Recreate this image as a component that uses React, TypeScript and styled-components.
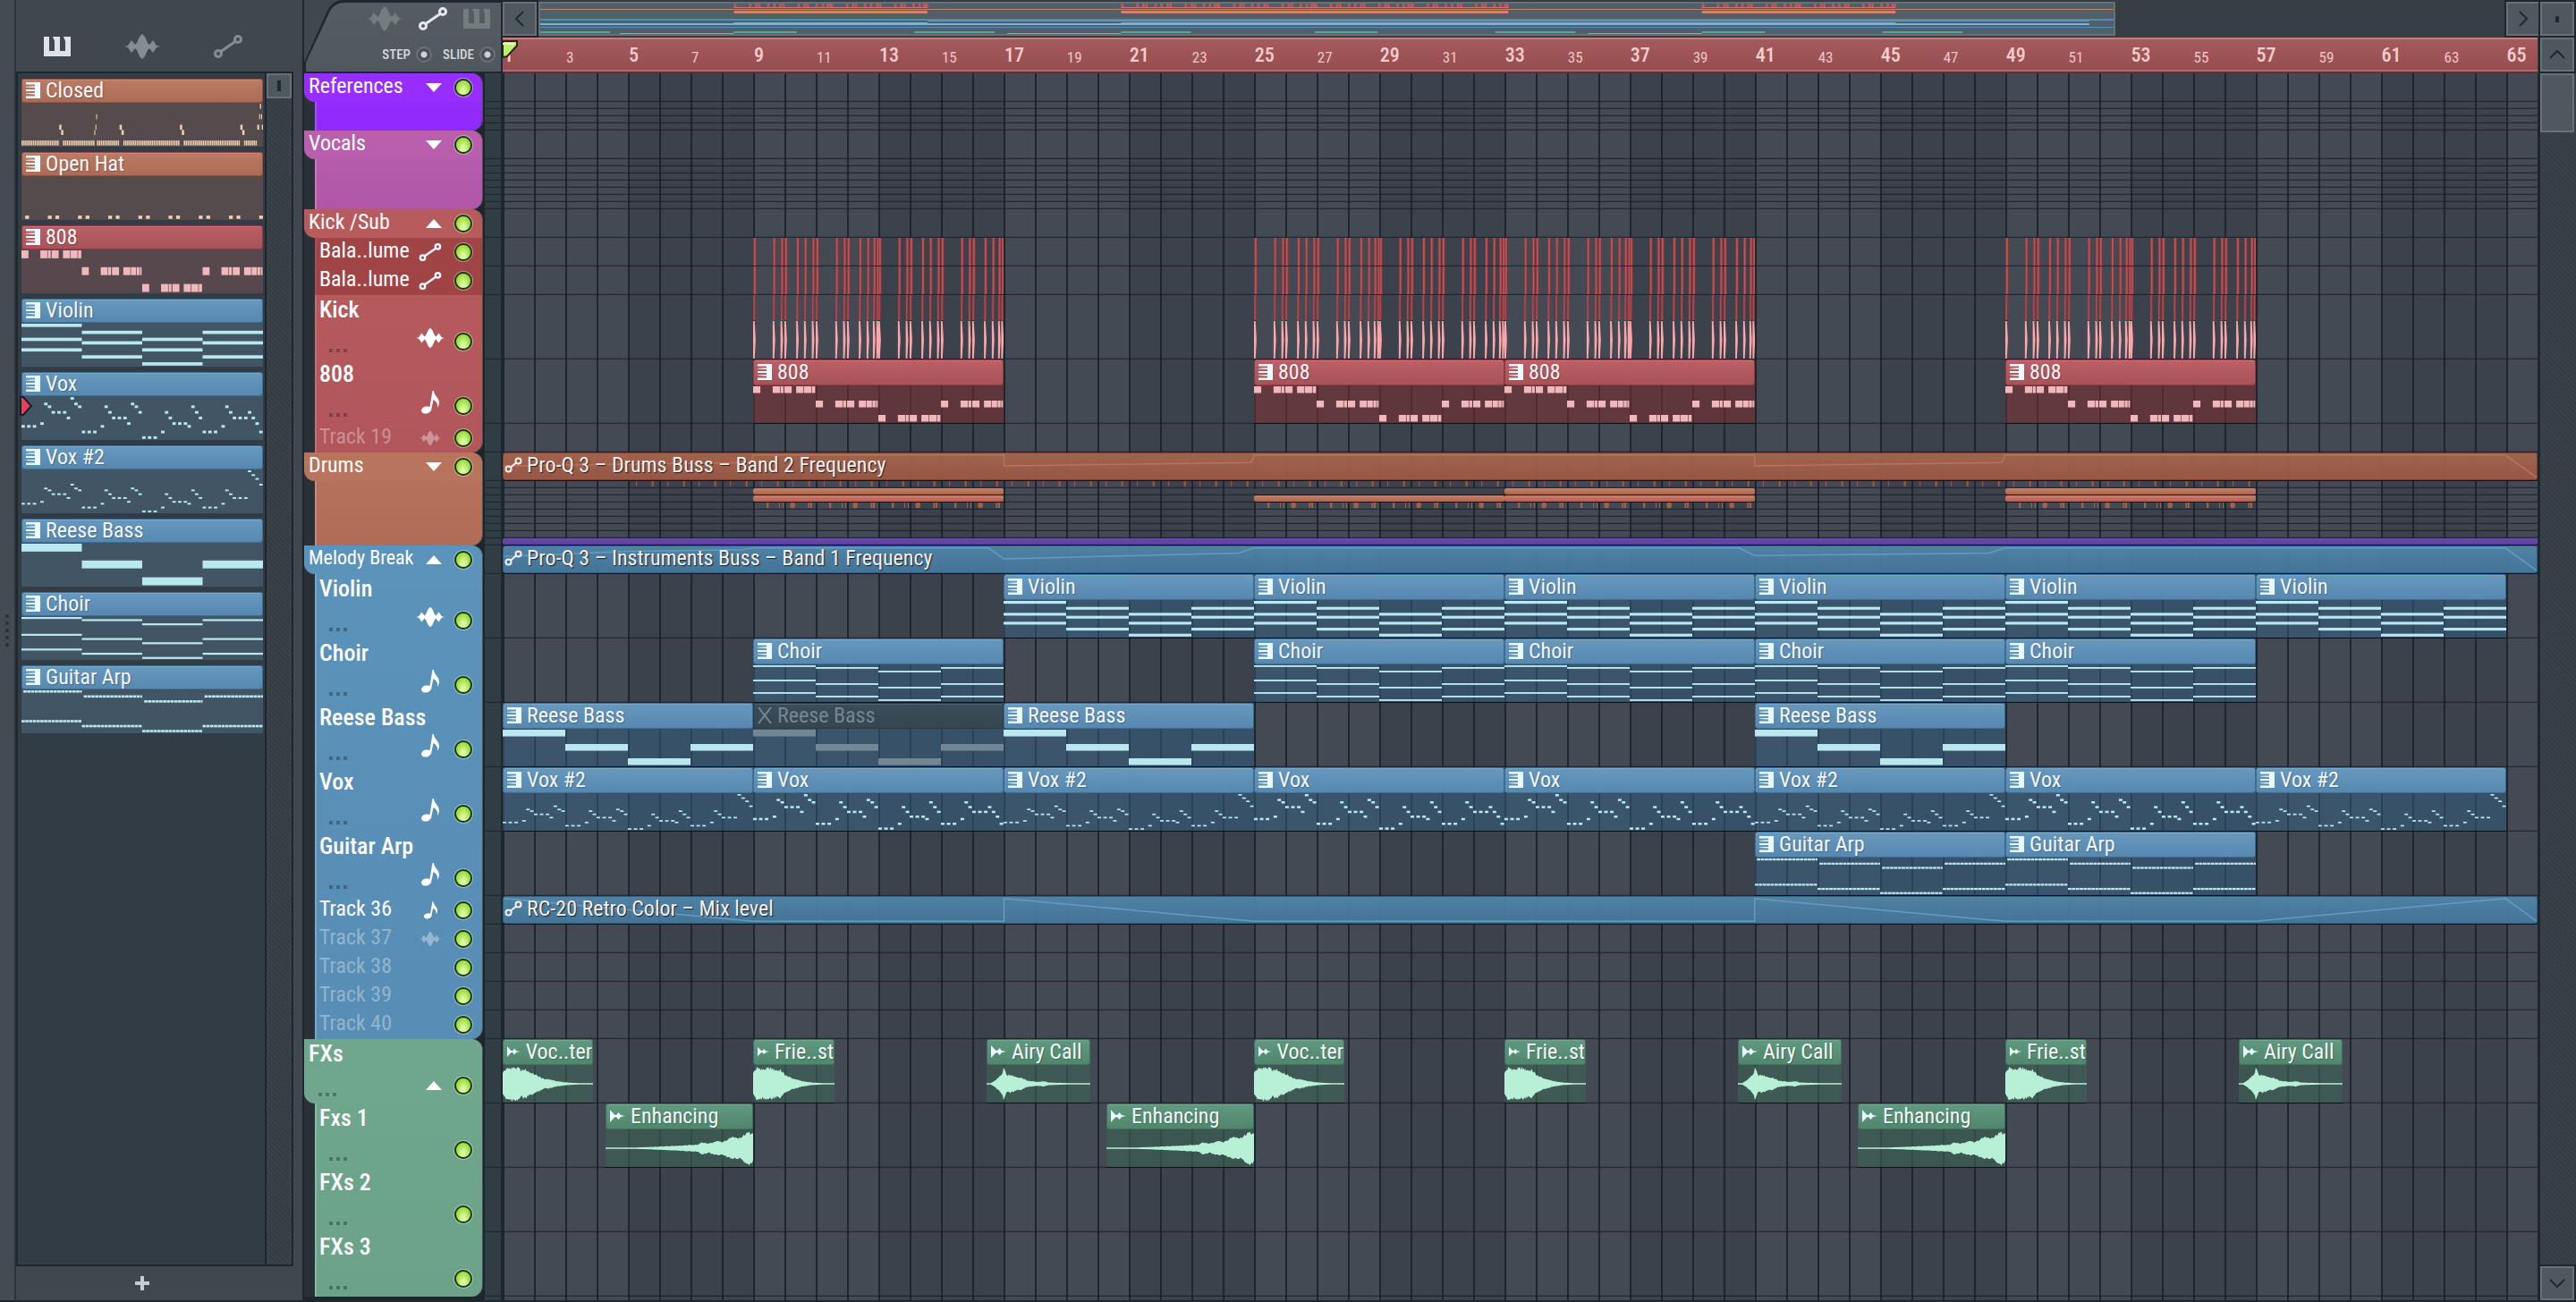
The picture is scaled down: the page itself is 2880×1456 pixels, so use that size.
import React from "react";
import styled, { createGlobalStyle, css } from "styled-components";

/* ---------- theme values ---------- */

const FONT = `"Roboto Condensed", Roboto, "Noto Sans", sans-serif`;
const EDGE = "#1e272d";
const BARS = 65;

type Tint = {
  head: string;
  headLow: string;
  rim: string;
  body: string;
  picker: string;
  note: string;
};

const TINTS: Record<string, Tint> = {
  brown: { head: "#ba7a63", headLow: "#ad6c55", rim: "#93503c", body: "rgba(120,80,60,.6)", picker: "#554b4c", note: "#f0cfb4" },
  red: { head: "#b86066", headLow: "#a95257", rim: "#8d3c42", body: "rgba(119,46,48,.6)", picker: "#57484d", note: "#f0b8bc" },
  blue: { head: "#6699c0", headLow: "#5888af", rim: "#3c6d95", body: "rgba(51,98,133,.5)", picker: "#415565", note: "#b9e8f0" },
  green: { head: "#5f9880", headLow: "#52866e", rim: "#3f7059", body: "rgba(62,102,85,.6)", picker: "#405b54", note: "#b8efd7" },
  muted: { head: "#3b4d5a", headLow: "#36454f", rim: "#2c3944", body: "rgba(51,98,133,.5)", picker: "#415565", note: "#728694" },
};

/* ---------- note patterns: x runs over 64 steps, rows counted from the top ---------- */

type Note = [x: number, row: number, len: number];
type Pattern = { rows: number; notes: Note[] };

const chords = (rows: number, sections: number[][]): Pattern => ({
  rows,
  notes: sections.flatMap((s, i) => s.map((r): Note => [i * 16, r, 16])),
});

const STEPS = [0, 1.5, 3, 5, 6, 7, 8, 9.5, 11, 12, 13, 14, 15];
const melody = (rows: number, sections: number[][]): Pattern => ({
  rows,
  notes: sections.flatMap((s, i) => s.map((r, k): Note => [i * 16 + STEPS[k], r, 0.9])),
});

const bassHits = (i: number, row: number): Note[] =>
  (i % 2 === 0
    ? [[0, 2], [5, 2], [7, 0.9], [8, 2], [11, 2], [13, 2], [15, 1]]
    : [[0, 2], [5, 2], [7, 0.9], [8, 2], [11, 2], [13, 1.5], [14.5, 0.9], [15.4, 0.6]]
  ).map(([x, l]): Note => [i * 16 + x, row, l - 0.15]);

const ticks = (from: number, to: number, row: number): Note[] => {
  const out: Note[] = [];
  for (let x = from; x < to - 0.2; x += 0.5) out.push([x, row, 0.36]);
  return out;
};

const arp = (): Note[] =>
  [0, 2, 4, 2].flatMap((r, i) => {
    const out: Note[] = [];
    for (let k = 0; k < 16; k++) {
      if (k > 0) out.push([i * 16 + k - 0.5, r, 0.88]);
      out.push([i * 16 + k, r + 12, 0.88]);
    }
    out.push([i * 16 + 15.5, r, 0.5]);
    return out;
  });

const PATTERNS: Record<string, Pattern> = {
  Closed: {
    rows: 8,
    notes: [
      ...ticks(0, 10, 7), ...ticks(11, 19.3, 7), ...ticks(20, 26, 7), ...ticks(27, 42, 7), ...ticks(43, 58, 7), ...ticks(59, 62.6, 7),
      [10, 4, 0.6], [10.5, 5, 0.6], [19.3, 5, 0.25], [19.6, 4, 0.25], [19.8, 2, 0.25],
      [26, 4, 0.6], [26.5, 5, 0.6], [42, 4, 0.6], [42.5, 5, 0.6], [58, 4, 0.6], [58.5, 5, 0.6],
      [62.5, 4, 0.5], [63.7, 4, 0.3], [63, 2, 0.25], [63.5, 2, 0.25], [63.2, 0, 0.3],
    ],
  },
  "Open Hat": { rows: 12, notes: [1, 7, 9, 15, 17, 23, 25, 31, 33, 39, 41, 47, 49, 55, 57, 63].map((x): Note => [x, 11, 1]) },
  "808": { rows: 5, notes: [0, 2, 4, 2].flatMap((r, i) => bassHits(i, r)) },
  Violin: chords(12, [[0, 4, 7], [2, 5, 9], [4, 7, 11], [2, 5, 9]]),
  Vox: melody(15, [
    [10, 10, 10, 9, 2, 3, 5, 5, 5, 7, 0, 2, 3],
    [12, 12, 12, 10, 3, 5, 7, 7, 7, 9, 2, 3, 5],
    [14, 14, 14, 12, 5, 7, 9, 9, 9, 10, 3, 5, 7],
    [12, 12, 12, 10, 3, 5, 7, 7, 7, 5, 7, 9, 12],
  ]),
  "Vox #2": melody(22, [
    [17, 17, 17, 16, 9, 10, 12, 12, 12, 14, 7, 9, 10],
    [19, 19, 19, 17, 10, 12, 14, 14, 14, 16, 9, 10, 12],
    [21, 21, 21, 19, 12, 14, 16, 16, 16, 17, 10, 12, 14],
    [19, 19, 19, 17, 10, 12, 14, 14, 14, 0, 2, 4, 7],
  ]),
  "Reese Bass": chords(5, [[0], [2], [4], [2]]),
  Choir: chords(20, [[0, 8, 15], [1, 10, 17], [3, 12, 19], [1, 10, 17]]),
  "Guitar Arp": { rows: 17, notes: arp() },
};

/* ---------- audio envelopes: [position, amplitude] ---------- */

const ENVELOPES: Record<string, [number, number][]> = {
  "Voc..ter": [[0, 0.72], [0.04, 0.92], [0.1, 1], [0.17, 0.98], [0.21, 0.82], [0.25, 0.9], [0.3, 0.72], [0.38, 0.52], [0.46, 0.28], [0.5, 0.3], [0.6, 0.16], [0.7, 0.09], [0.8, 0.05], [1, 0.02]],
  "Frie..st": [[0, 0.7], [0.05, 1], [0.12, 0.88], [0.2, 0.98], [0.28, 0.86], [0.34, 0.84], [0.4, 0.52], [0.48, 0.34], [0.6, 0.17], [0.7, 0.09], [0.85, 0.04], [1, 0.02]],
  "Airy Call": [[0, 0.02], [0.04, 0.03], [0.08, 0.2], [0.12, 0.42], [0.15, 0.62], [0.167, 1], [0.19, 0.55], [0.25, 0.52], [0.3, 0.4], [0.34, 0.36], [0.4, 0.18], [0.5, 0.12], [0.55, 0.16], [0.6, 0.08], [0.8, 0.04], [1, 0.01]],
  Enhancing: [[0, 0.03], [0.2, 0.04], [0.4, 0.11], [0.55, 0.18], [0.63, 0.22], [0.65, 0.38], [0.7, 0.28], [0.75, 0.44], [0.79, 0.38], [0.86, 0.68], [0.9, 0.62], [0.95, 0.85], [0.97, 1], [1, 0.85]],
};

const wavePath = (name: string): string => {
  const env = ENVELOPES[name];
  const n = 110;
  const amp = (t: number) => {
    for (let i = 1; i < env.length; i++) {
      if (t <= env[i][0]) {
        const [x0, y0] = env[i - 1];
        const [x1, y1] = env[i];
        return y0 + ((y1 - y0) * (t - x0)) / (x1 - x0);
      }
    }
    return env[env.length - 1][1];
  };
  const noise = (i: number, k: number) => {
    const v = Math.sin(i * 12.9898 + k * 78.233) * 43758.5453;
    return v - Math.floor(v);
  };
  const top: string[] = [];
  const low: string[] = [];
  for (let i = 0; i <= n; i++) {
    const a = amp(i / n);
    top.push(`${i} ${(50 - Math.max(1.6, a * (0.8 + 0.2 * noise(i, 1)) * 47)).toFixed(1)}`);
    low.unshift(`${i} ${(50 + Math.max(1.6, a * (0.8 + 0.2 * noise(i, 2)) * 47)).toFixed(1)}`);
  }
  return `M${top.join("L")}L${low.join("L")}Z`;
};

/* ---------- arrangement data ---------- */

type Clip = { at: number; len: number; name?: string; kind: "midi" | "audio" | "automation" | "strip" | "kick" | "hits" | "ticks" | "bar"; tint?: string; curve?: [number, number][]; muted?: boolean };
type Icon = "wave" | "note" | "auto" | "up" | "down";
type Track = { name?: string; size: "mini" | "small" | "tall"; icon?: Icon; dim?: boolean; dark?: boolean; clips?: Clip[] };
type Group = { color: string; low: string; light: string; tracks: Track[] };

const midi = (name: string, starts: number[], tint = "blue"): Clip[] => starts.map((at) => ({ at, len: 8, name, kind: "midi", tint }));
const blocks = (kind: Clip["kind"], starts: number[]): Clip[] => starts.map((at) => ({ at, len: 8, kind }));
const minis = (n: number): Track[] => Array.from({ length: n }, () => ({ size: "mini" as const }));
const KICK_BLOCKS = [8, 24, 32, 48];

const GROUPS: Group[] = [
  { color: "#982dff", low: "#9029fb", light: "#a94fff", tracks: [{ name: "References", size: "small", icon: "down" }, ...minis(4)] },
  { color: "#b95fae", low: "#b156a8", light: "#c878bf", tracks: [{ name: "Vocals", size: "small", icon: "down" }, ...minis(7)] },
  {
    color: "#b85b5d",
    low: "#b1565b",
    light: "#c66d6e",
    tracks: [
      { name: "Kick /Sub", size: "small", icon: "up" },
      { name: "Bala..lume", size: "small", icon: "auto", dark: true, clips: blocks("strip", KICK_BLOCKS) },
      { name: "Bala..lume", size: "small", icon: "auto", dark: true, clips: blocks("strip", KICK_BLOCKS) },
      { name: "Kick", size: "tall", icon: "wave", clips: blocks("kick", KICK_BLOCKS) },
      { name: "808", size: "tall", icon: "note", clips: midi("808", KICK_BLOCKS, "red") },
      { name: "Track 19", size: "small", icon: "wave", dim: true },
    ],
  },
  {
    color: "#b8745d",
    low: "#b06c55",
    light: "#c78a73",
    tracks: [
      {
        name: "Drums",
        size: "small",
        icon: "down",
        clips: [{
          at: 0, len: 65, kind: "automation", tint: "brown", name: "Pro-Q 3 – Drums Buss – Band 2 Frequency",
          curve: [[0, 15], [7.9, 11], [8, 2], [16, 2], [16, 15], [23.9, 11], [24, 2], [40, 2], [40, 15], [47.9, 11], [48, 2], [64, 2], [65, 29]],
        }],
      },
      { size: "mini", clips: [{ at: 4, len: 52, kind: "ticks" }] },
      { size: "mini", clips: KICK_BLOCKS.map((at) => ({ at, len: 8, kind: "bar", tint: "brown", muted: at === 24 })) },
      { size: "mini", clips: KICK_BLOCKS.map((at) => ({ at, len: 8, kind: "bar", tint: "brown" })) },
      { size: "mini", clips: blocks("hits", KICK_BLOCKS) },
      ...minis(4),
      { size: "mini", clips: [{ at: 0, len: 65, kind: "bar", tint: "purple" }] },
    ],
  },
  {
    color: "#5b93ba",
    low: "#588db5",
    light: "#75a8cb",
    tracks: [
      {
        name: "Melody Break",
        size: "small",
        icon: "up",
        clips: [{
          at: 0, len: 65, kind: "automation", tint: "blue", name: "Pro-Q 3 – Instruments Buss – Band 1 Frequency",
          curve: [[0, 12], [4, 6], [7.6, 4], [8, 2], [15.5, 2], [16, 15], [23.5, 8], [24, 2], [39.5, 2], [40, 11], [47.5, 8], [48, 2], [64, 2], [65, 29]],
        }],
      },
      { name: "Violin", size: "tall", icon: "wave", clips: midi("Violin", [16, 24, 32, 40, 48, 56]) },
      { name: "Choir", size: "tall", icon: "note", clips: midi("Choir", [8, 24, 32, 40, 48]) },
      {
        name: "Reese Bass",
        size: "tall",
        icon: "note",
        clips: midi("Reese Bass", [0, 8, 16, 40]).map((c) => (c.at === 8 ? { ...c, muted: true } : c)),
      },
      {
        name: "Vox",
        size: "tall",
        icon: "note",
        clips: ["Vox #2", "Vox", "Vox #2", "Vox", "Vox", "Vox #2", "Vox", "Vox #2"].map((name, i) => ({ at: i * 8, len: 8, name, kind: "midi", tint: "blue" })),
      },
      { name: "Guitar Arp", size: "tall", icon: "note", clips: midi("Guitar Arp", [40, 48]) },
      {
        name: "Track 36",
        size: "small",
        icon: "note",
        clips: [{
          at: 0, len: 65, kind: "automation", tint: "blue", name: "RC-20 Retro Color – Mix level",
          curve: [[0, 2], [8, 29], [16, 29], [16, 2], [24, 29], [40, 29], [40, 2], [48, 29], [56, 29], [64, 2], [65, 29]],
        }],
      },
      { name: "Track 37", size: "small", icon: "wave", dim: true },
      { name: "Track 38", size: "small", dim: true },
      { name: "Track 39", size: "small", dim: true },
      { name: "Track 40", size: "small", dim: true },
    ],
  },
  {
    color: "#6fa78e",
    low: "#6ba289",
    light: "#86bba3",
    tracks: [
      {
        name: "FXs",
        size: "tall",
        icon: "up",
        clips: [
          [0, 2.886, "Voc..ter"], [8, 2.6, "Frie..st"], [15.457, 3.314, "Airy Call"], [24, 2.886, "Voc..ter"],
          [32, 2.6, "Frie..st"], [39.457, 3.314, "Airy Call"], [48, 2.6, "Frie..st"], [55.457, 3.314, "Airy Call"],
        ].map(([at, len, name]) => ({ at: at as number, len: len as number, name: name as string, kind: "audio", tint: "green" })),
      },
      { name: "Fxs 1", size: "tall", clips: [3.286, 19.286, 43.286].map((at) => ({ at, len: 4.714, name: "Enhancing", kind: "audio", tint: "green" })) },
      { name: "FXs 2", size: "tall" },
      { name: "FXs 3", size: "tall" },
    ],
  },
];

const PICKER: [string, string][] = [
  ["Closed", "brown"], ["Open Hat", "brown"], ["808", "red"], ["Violin", "blue"], ["Vox", "blue"],
  ["Vox #2", "blue"], ["Reese Bass", "blue"], ["Choir", "blue"], ["Guitar Arp", "blue"],
];

const KICK_HITS = [0, 5, 7, 8, 11, 13, 15, 16, 21, 23, 24, 27, 29, 30.6, 31.5, 32, 37, 39, 40, 43, 45, 47, 48, 53, 55, 56, 59, 61, 62.6, 63.4];

const HEIGHTS = { mini: 8, small: 32, tall: 72 };

/* ---------- base ---------- */

const Global = createGlobalStyle`
  html, body { margin: 0; background: ${EDGE}; }
  *, *::before, *::after { box-sizing: border-box; }
  body { font-family: ${FONT}; color: #fff; overflow: hidden; }
  button { font: inherit; color: inherit; border: 0; padding: 0; margin: 0; background: none; cursor: pointer; }
  ul { list-style: none; margin: 0; padding: 0; }
  svg { display: block; }
`;

const Shell = styled.div`
  display: flex;
  height: 100vh;
  padding-bottom: 2px;
  background: ${EDGE};
`;

const hatch = css`
  background: repeating-linear-gradient(45deg, #343d44 0 2px, #3a4148 2px 4px);
`;

/* ---------- icons ---------- */

const PianoIcon = ({ w = 30, h = 22 }: { w?: number; h?: number }) => (
  <svg width={w} height={h} viewBox="0 0 30 22" fill="currentColor" aria-hidden>
    <path d="M0 0H6V16H12V5L10 0H18V16H24V5L22 0H30V22H0Z" />
  </svg>
);

const WaveIcon = ({ w = 40, h = 28 }: { w?: number; h?: number }) => (
  <svg width={w} height={h} viewBox="0 0 40 28" fill="currentColor" aria-hidden>
    <path d="M0 14L4 13L8 7L12 12L14 10L17 3L20 0L23 3L26 10L28 12L32 7L36 13L40 14L36 15L32 21L28 16L26 18L23 25L20 28L17 25L14 18L12 16L8 21L4 15Z" />
  </svg>
);

const AutoIcon = ({ w = 32, h = 26 }: { w?: number; h?: number }) => (
  <svg width={w} height={h} viewBox="0 0 32 26" fill="none" stroke="currentColor" strokeWidth="3" aria-hidden>
    <circle cx="5" cy="21" r="3.5" />
    <circle cx="27" cy="5" r="3.5" />
    <path d="M8 18.500L24 7.500" />
  </svg>
);

const CurveIcon = () => (
  <svg width="20" height="18" viewBox="0 0 20 18" fill="none" stroke="currentColor" strokeWidth="2" aria-hidden>
    <circle cx="4.500" cy="13.500" r="3" />
    <circle cx="15.500" cy="4.500" r="3" />
    <path d="M7 11.500L13 6.500" />
  </svg>
);

const NoteIcon = ({ w = 20, h = 26 }: { w?: number; h?: number }) => (
  <svg width={w} height={h} viewBox="0 0 20 26" fill="currentColor" aria-hidden>
    <ellipse cx="5.500" cy="21.500" rx="5.500" ry="4" transform="rotate(-14 5.500 21.500)" />
    <path d="M9 21L12.500 0H14C14 5 20 8 20 13C20 15 19.500 17 18 19C18.500 14 17 12 13.500 10L11 22Z" />
  </svg>
);

const Triangle = ({ up }: { up: boolean }) => (
  <svg width="18" height="10" viewBox="0 0 18 10" fill="currentColor" aria-hidden>
    <path d={up ? "M9 0L18 10H0Z" : "M0 0H18L9 10Z"} />
  </svg>
);

const KeysIcon = () => (
  <svg width="16" height="18" viewBox="0 0 16 18" fill="currentColor" aria-hidden>
    <path d="M0 0H16V18H0V15.500H10V13.500L0 13V12.500L6 12H10V10H0V8H10V6L0 5.500V5L6 4.500H10V2.500H0Z" />
  </svg>
);

const CrossIcon = () => (
  <svg width="16" height="18" viewBox="0 0 16 18" fill="none" stroke="#76858f" strokeWidth="2" aria-hidden>
    <path d="M1 0L8 9L15 0M1 18L8 9L15 18" />
  </svg>
);

const AudioIcon = () => (
  <svg width="17" height="14" viewBox="0 0 17 14" fill="currentColor" aria-hidden>
    <path d="M0 0L5 5.500L7 6L9.500 3L12 6L17 7L12 8L9.500 11L7 8L5 8.500L0 14Z" />
  </svg>
);

const Chevron = ({ turn }: { turn: number }) => (
  <svg width="20" height="20" viewBox="0 0 20 20" fill="none" stroke="#1f2930" strokeWidth="2" aria-hidden>
    <path d="M14 2L6 10L14 18" transform={`rotate(${turn} 10 10)`} />
  </svg>
);

/* ---------- picker ---------- */

const Grip = styled.div`
  flex: 0 0 18px;
  display: flex;
  flex-direction: column;
  align-items: center;
  justify-content: center;
  gap: 4px;
  padding-bottom: 44px;
  background: #444c53;
  border-right: 2px solid #2c353b;
  i { width: 4px; height: 4px; background: #2c343a; }
`;

const Picker = styled.aside`
  flex: 0 0 320px;
  display: flex;
  flex-direction: column;
  padding-right: 10px;
  background: #40484f;
`;

const PickerTools = styled.div`
  flex: 0 0 80px;
  display: flex;
  align-items: center;
  gap: 60px;
  padding: 24px 0 0 31px;
`;

const ToolButton = styled.button<{ $on?: boolean; $ink?: string }>`
  color: ${(p) => p.$ink ?? (p.$on ? "#dfe3e8" : "#858d92")};
`;

const PickerBox = styled.div`
  flex: 1;
  min-height: 0;
  display: flex;
  border: 2px solid ${EDGE};
  background: #323c44;
`;

const PickerList = styled.ul`
  flex: 1;
  display: flex;
  flex-direction: column;
  gap: 6px;
  padding: 6px 2px 6px 4px;
`;

const PickerScroll = styled.div`
  flex: 0 0 30px;
  border-left: 2px solid ${EDGE};
  ${hatch}
`;

const Thumb = styled.button<{ $h: number }>`
  display: grid;
  place-items: center;
  width: 100%;
  height: ${(p) => p.$h}px;
  background: #50585f;
  border: 2px solid #687178;
  &::before { content: ""; width: 4px; height: ${(p) => (p.$h > 30 ? 0 : 12)}px; background: #1f2930; }
`;

const PickerItem = styled.button<{ $t: Tint }>`
  position: relative;
  display: block;
  width: 100%;
  height: 76px;
  text-align: left;
  background: ${(p) => p.$t.picker};
`;

const ClipHead = styled.span<{ $t: Tint; $h: number }>`
  flex: none;
  display: flex;
  align-items: center;
  gap: 6px;
  height: ${(p) => p.$h}px;
  padding: 0 0 1px 4px;
  border: 1px solid ${(p) => p.$t.rim};
  border-radius: 3px;
  background: linear-gradient(${(p) => p.$t.head}, ${(p) => p.$t.headLow});
  box-shadow: inset 0 1px 0 rgba(255, 255, 255, 0.14);
  color: #eafcff;
  font-size: 24px;
  line-height: 24px;
  white-space: nowrap;
  overflow: hidden;
`;

const ClipName = styled.span<{ $muted?: boolean }>`
  color: ${(p) => (p.$muted ? "#76858f" : "#f4f7f8")};
  text-shadow: ${(p) => (p.$muted ? "none" : "1px 1px 1px rgba(20,30,40,.3)")};
`;

const Marker = styled.svg`
  position: absolute;
  left: -2px;
  top: 27px;
`;

const AddButton = styled.button`
  flex: 0 0 38px;
  display: grid;
  place-items: center;
  padding-right: 28px;
`;

const NotesSvg = styled.svg`
  width: 100%;
  flex: 1;
  min-height: 0;
  padding: 1px 0;
`;

const PickerFrame = styled.span`
  display: flex;
  flex-direction: column;
  height: 100%;
`;

const Notes = ({ name, color }: { name: string; color: string }) => {
  const p = PATTERNS[name];
  return (
    <NotesSvg viewBox={`0 0 64 ${p.rows}`} preserveAspectRatio="none" fill={color} aria-hidden>
      {p.notes.map(([x, r, l], i) => (
        <rect key={i} x={x} y={r} width={l} height={0.94} />
      ))}
    </NotesSvg>
  );
};

/* ---------- playlist top ---------- */

const Playlist = styled.main`
  flex: 1;
  min-width: 0;
  display: flex;
  flex-direction: column;
  border-left: 2px solid ${EDGE};
`;

const TopRow = styled.div`
  flex: 0 0 82px;
  display: flex;
  background: #363e44;
`;

const Corner = styled.div`
  flex: 0 0 222px;
  display: flex;
  flex-direction: column;
  align-items: flex-end;
  padding: 2px 4px 0 0;
  background: #40484f;
  position: relative;
  z-index: 0;
  &::before, &::after {
    content: "";
    position: absolute;
    z-index: -1;
    inset: 0;
    background: ${EDGE};
    clip-path: path("M0 82V70L26 12Q32 0 44 0H222V82Z");
  }
  &::after {
    background: linear-gradient(#555d63, #50585e);
    clip-path: path("M2 80V70L29 12Q34 3 46 3H220V80Z");
  }
`;

const CornerTools = styled.div`
  display: flex;
  align-items: center;
  gap: 18px;
  height: 38px;
  padding-right: 10px;
`;

const CornerSwitches = styled.div`
  display: flex;
  align-items: center;
  gap: 12px;
  height: 42px;
  padding-right: 4px;
`;

const Switch = styled.label`
  display: flex;
  align-items: center;
  gap: 6px;
  font-size: 15px;
  font-weight: 500;
  line-height: 20px;
  color: #d5d9dc;
  input {
    appearance: none;
    width: 18px;
    height: 18px;
    margin: 0;
    border-radius: 50%;
    border: 2px solid #697277;
    background: radial-gradient(circle, #cdd2d6 0 3px, #4a5258 4px);
  }
`;

const TimeCol = styled.div`
  flex: 1;
  min-width: 0;
  display: flex;
  flex-direction: column;
`;

const OverviewRow = styled.div`
  flex: 0 0 42px;
  display: flex;
  gap: 2px;
  padding: 2px 0;
`;

const Overview = styled.div`
  flex: 1;
  min-width: 0;
`;

const OverviewThumb = styled.div`
  width: 80.2%;
  height: 38px;
  background: #50606a;
  border: 2px solid #66727a;
  svg { width: 100%; height: 34px; }
`;

const SquareButton = styled.button`
  flex: 0 0 38px;
  display: grid;
  place-items: center;
  height: 38px;
  background: #50585f;
  border: 2px solid #687178;
  outline: 2px solid ${EDGE};
`;

const Ruler = styled.div`
  position: relative;
  display: flex;
  height: 38px;
  margin-right: 3px;
  background: linear-gradient(#a55a5d, #964e51);
  border-top: 2px solid #c77d7c;
  border-bottom: 2px solid #b56a6b;
`;

const RulerWrap = styled.div`
  flex: 0 0 40px;
  border-bottom: 2px solid #5a3339;
`;

const Mark = styled.span<{ $span: number; $major: boolean }>`
  flex: ${(p) => p.$span} 0 0;
  min-width: 0;
  padding: ${(p) => (p.$major ? 6 : 8)}px 0 0 1px;
  color: ${(p) => (p.$major ? "#fbcdcd" : "#f2c4c4")};
  font-size: ${(p) => (p.$major ? 22 : 17)}px;
  font-weight: ${(p) => (p.$major ? 500 : 400)};
  line-height: 24px;
`;

const PlayHead = styled.svg`
  position: absolute;
  left: 0;
  top: 1px;
`;

/* ---------- playlist body ---------- */

const Body = styled.div`
  flex: 1;
  min-height: 0;
  display: flex;
  overflow: hidden;
`;

const HeaderCol = styled.div`
  flex: 0 0 202px;
  padding-right: 3px;
  background: #1c262b;
  overflow: hidden;
`;

const GroupBox = styled.section`
  display: flex;
  background: #2a3136;
  border-radius: 0 14px 14px 0;
`;

const GroupBody = styled.div<{ $g: Group }>`
  flex: 1;
  min-width: 0;
  margin-left: 12px;
  border-radius: 0 12px 12px 0;
  background: linear-gradient(${(p) => p.$g.color}, ${(p) => p.$g.low});
  box-shadow: inset 2px 0 0 ${(p) => p.$g.light}, 1px 0 0 rgba(255, 255, 255, 0.2);
`;

const HeaderRow = styled.div<{ $h: number; $lead?: boolean; $bg?: string; $dark?: boolean }>`
  display: flex;
  flex-direction: ${(p) => (p.$h > 32 ? "column" : "row")};
  height: ${(p) => p.$h}px;
  ${(p) =>
    p.$lead &&
    css`
      margin-left: -12px;
      border-radius: 0 12px 0 12px;
      background: ${p.$bg};
    `}
  ${(p) => p.$dark && css`background: rgba(140, 45, 48, 0.5);`}
`;

const TrackName = styled.span<{ $big: boolean; $dim?: boolean; $small?: boolean }>`
  flex: ${(p) => (p.$big ? "0 0 32px" : "1")};
  min-width: 0;
  padding-left: 5px;
  font-size: ${(p) => (p.$big ? 26 : p.$small ? 22 : 24)}px;
  font-weight: ${(p) => (p.$big ? 500 : 400)};
  line-height: ${(p) => (p.$big ? 32 : 28)}px;
  white-space: nowrap;
  color: ${(p) => (p.$dim ? "rgba(255,255,255,.36)" : "#fff")};
`;

const Controls = styled.div<{ $tall: boolean }>`
  display: flex;
  align-items: center;
  height: ${(p) => (p.$tall ? 40 : 32)}px;
  padding-right: 11px;
`;

const Dots = styled.button`
  display: flex;
  gap: 4px;
  margin: auto auto 8px 16px;
  i { width: 4px; height: 4px; background: rgba(0, 0, 0, 0.28); }
`;

const IconSlot = styled.span<{ $dim?: boolean; $kind?: Icon; $tall?: boolean }>`
  display: flex;
  justify-content: center;
  width: 32px;
  margin-right: 11px;
  padding: ${(p) => (p.$kind === "up" || p.$kind === "down" ? "0 0 0 8px" : p.$tall ? "0 0 8px" : "0")};
  color: ${(p) => (p.$dim ? "rgba(255,255,255,.36)" : "#fff")};
`;

const Led = styled.button`
  flex: 0 0 20px;
  height: 20px;
  border-radius: 50%;
  border: 2px solid #1f3a14;
  background: radial-gradient(ellipse at 50% 85%, #d9f7a0 0 20%, #a4e34a 60%, #84cf2c);
  box-shadow: 0 0 0 1px rgba(230, 255, 220, 0.45);
`;

const Gutter = styled.div`
  flex: 0 0 20px;
  border-right: 2px solid ${EDGE};
  background: #313d44;
`;

const Lanes = styled.div`
  flex: 1;
  min-width: 0;
  margin-right: 3px;
  overflow: hidden;
  background-color: #434a53;
  background-image: linear-gradient(90deg, #1e252d 2px, transparent 2px), linear-gradient(90deg, transparent 50%, #3b424b 50%);
  background-size: calc(100% / ${BARS}) 100%, calc(100% * 8 / ${BARS}) 100%;
`;

const rowLine = css`
  background-image: linear-gradient(transparent, rgba(24, 28, 36, 0.9));
  background-size: 100% 2px;
  background-position: 0 100%;
  background-repeat: no-repeat;
`;

const Lane = styled.div<{ $h: number }>`
  display: flex;
  height: ${(p) => p.$h}px;
  ${rowLine}
`;

const GutterCell = styled.div<{ $h: number }>`
  height: ${(p) => p.$h}px;
  ${rowLine}
`;

const ClipBox = styled.div<{ $bg?: string; $line?: boolean }>`
  flex: none;
  display: flex;
  flex-direction: column;
  height: calc(100% - 1px);
  background: ${(p) => p.$bg ?? "none"};
  box-shadow: ${(p) => (p.$line ? "0 1px 0 #0d1218" : "none")};
  overflow: hidden;
`;

const FillSvg = styled.svg`
  width: 100%;
  flex: 1;
  min-height: 0;
`;

const AutoBox = styled(ClipBox)<{ $brown: boolean }>`
  position: relative;
  border-radius: 3px;
  border: 1px solid ${(p) => (p.$brown ? "#7e3f2a" : "#2c5f86")};
  background: ${(p) => (p.$brown ? "linear-gradient(rgba(167,100,78,.95), rgba(154,88,68,.95))" : "linear-gradient(rgba(80,133,170,.95), rgba(68,118,154,.95))")};
`;

const Curve = styled.svg`
  position: absolute;
  inset: 0;
  width: 100%;
  height: 100%;
`;

const AutoTitle = styled.span`
  position: relative;
  display: flex;
  align-items: center;
  gap: 5px;
  padding-left: 1px;
  font-size: 24px;
  line-height: 26px;
  white-space: nowrap;
  color: #f5efec;
  text-shadow: 1px 1px 1px #1c2228;
`;

const MiniBar = styled(ClipBox)<{ $tone: string }>`
  border-radius: 2px;
  background: ${(p) => p.$tone};
  box-shadow: 0 1px 0 #0d1218;
`;

const VScroll = styled.div`
  flex: 0 0 40px;
  display: flex;
  flex-direction: column;
  justify-content: space-between;
  padding-right: 2px;
  ${hatch}
`;

const TopRight = styled.div`
  flex: 0 0 40px;
  display: flex;
  flex-direction: column;
  gap: 2px;
  padding: 2px 2px 2px 0;
  background: ${EDGE};
  i { width: 4px; height: 7px; background: #1f2930; }
`;

/* ---------- clip drawings ---------- */

const StripDrawing = () => (
  <FillSvg viewBox="0 0 64 10" preserveAspectRatio="none" aria-hidden>
    {KICK_HITS.map((x) => (
      <g key={x}>
        <rect x={x} y="0" width={0.85} height="10" fill="#84363a" />
        <rect x={x + 0.2} y="0" width={0.42} height="10" fill="#b8555a" />
      </g>
    ))}
  </FillSvg>
);

const KickDrawing = () => (
  <FillSvg viewBox="0 0 64 71" preserveAspectRatio="none" aria-hidden>
    {KICK_HITS.map((x) => (
      <g key={x}>
        <rect x={x} y="0" width={0.6} height="28" fill="#93393f" />
        <rect x={x + 0.1} y="0" width={0.3} height="28" fill="#b3484e" />
        <path d={`M${x} 29H${x + 0.4}L${x + 0.65} 50L${x + 0.4} 71H${x}Z`} fill="#fda5a8" />
      </g>
    ))}
  </FillSvg>
);

const HitsDrawing = () => (
  <FillSvg viewBox="0 0 840 8" preserveAspectRatio="none" fill="#a85d45" aria-hidden>
    {[0, 210, 420, 630].map((o) => (
      <g key={o} transform={`translate(${o})`}>
        <rect x="45" width="7" height="7" />
        <rect x="87" width="3" height="7" />
        <rect x="99" width="3" height="7" />
        <rect x="124" width="17" height="7" rx="4" />
        <rect x="184" width="6" height="7" />
        <rect x="192" width="6" height="7" />
      </g>
    ))}
  </FillSvg>
);

const TicksDrawing = () => (
  <FillSvg viewBox="0 0 52 8" preserveAspectRatio="none" fill="#a05840" aria-hidden>
    {Array.from({ length: 104 }, (_, i) => (
      <rect key={i} x={0.26 + i * 0.5} width={i % 2 ? 0.06 : 0.03} height="7" />
    ))}
  </FillSvg>
);

const share = (bars: number) => `${(bars / BARS) * 100}%`;

const ClipView = ({ clip, gap }: { clip: Clip; gap: number }) => {
  const place = { width: share(clip.len), marginLeft: share(gap) };
  const tint = clip.muted ? TINTS.muted : TINTS[clip.tint ?? "red"];
  switch (clip.kind) {
    case "strip":
      return <ClipBox style={place}><StripDrawing /></ClipBox>;
    case "kick":
      return <ClipBox style={place}><KickDrawing /></ClipBox>;
    case "hits":
      return <ClipBox style={place}><HitsDrawing /></ClipBox>;
    case "ticks":
      return <ClipBox style={place}><TicksDrawing /></ClipBox>;
    case "bar":
      return (
        <MiniBar
          style={place}
          $tone={clip.muted ? "#3e4347" : clip.tint === "purple" ? "linear-gradient(#6a4bb0, #5a3f9c)" : "linear-gradient(#c8836a, #ac644b)"}
        />
      );
    case "automation":
      return (
        <AutoBox style={place} $brown={clip.tint === "brown"} $line>
          <Curve viewBox="0 0 65 31" preserveAspectRatio="none" fill="none" stroke={clip.tint === "brown" ? "#b9735b" : "#649cc3"} aria-hidden>
            <polyline points={clip.curve!.map((p) => p.join(",")).join(" ")} strokeWidth="1.500" vectorEffect="non-scaling-stroke" />
          </Curve>
          <AutoTitle><CurveIcon />{clip.name}</AutoTitle>
        </AutoBox>
      );
    case "audio":
      return (
        <ClipBox style={place} $bg={tint.body} $line>
          <ClipHead $t={tint} $h={29}><AudioIcon /><ClipName>{clip.name}</ClipName></ClipHead>
          <FillSvg viewBox="0 0 110 100" preserveAspectRatio="none" fill={tint.note} aria-hidden>
            <path d={wavePath(clip.name!)} />
          </FillSvg>
        </ClipBox>
      );
    default:
      return (
        <ClipBox style={place} $bg={tint.body} $line>
          <ClipHead $t={tint} $h={29}>
            {clip.muted ? <CrossIcon /> : <KeysIcon />}
            <ClipName $muted={clip.muted}>{clip.name}</ClipName>
          </ClipHead>
          <Notes name={clip.name!} color={tint.note} />
        </ClipBox>
      );
  }
};

const LaneView = ({ track }: { track: Track }) => {
  let end = 0;
  return (
    <Lane $h={HEIGHTS[track.size]}>
      {(track.clips ?? []).map((c, i) => {
        const gap = c.at - end;
        end = c.at + c.len;
        return <ClipView key={i} clip={c} gap={gap} />;
      })}
    </Lane>
  );
};

/* ---------- track headers ---------- */

const RowIcon = ({ icon, tall }: { icon?: Icon; tall: boolean }) => {
  if (icon === "wave") return tall ? <WaveIcon w={32} h={24} /> : <WaveIcon w={24} h={18} />;
  if (icon === "note") return tall ? <NoteIcon /> : <NoteIcon w={15} h={20} />;
  if (icon === "auto") return <AutoIcon w={26} h={20} />;
  if (icon === "up" || icon === "down")
    return <button aria-label={icon === "up" ? "Collapse group" : "Expand group"}><Triangle up={icon === "up"} /></button>;
  return null;
};

const TrackHeader = ({ track, lead, bg }: { track: Track; lead: boolean; bg: string }) => {
  const tall = track.size === "tall";
  if (!track.name) return <HeaderRow $h={HEIGHTS[track.size]} />;
  return (
    <HeaderRow $h={HEIGHTS[track.size]} $lead={lead} $bg={bg} $dark={track.dark}>
      <TrackName $big={tall} $dim={track.dim} $small={track.name.length > 11}>{track.name}</TrackName>
      <Controls $tall={tall}>
        {tall && <Dots aria-label={`${track.name} options`}><i /><i /><i /></Dots>}
        <IconSlot $dim={track.dim} $kind={track.icon} $tall={tall}><RowIcon icon={track.icon} tall={tall} /></IconSlot>
        <Led aria-label={`Mute ${track.name}`} />
      </Controls>
    </HeaderRow>
  );
};

/* ---------- overview drawing ---------- */

const OverviewDrawing = () => (
  <svg viewBox="0 0 65 34" preserveAspectRatio="none" aria-hidden>
    <rect x="0" y="6" width="65" height="1" fill="#c77f68" />
    {KICK_BLOCKS.map((b) => (
      <g key={b} transform={`translate(${b})`}>
        <rect x="0" y="4" width="8" height="1" fill="#d06f74" />
        {KICK_HITS.map((x) => <rect key={x} x={x / 8} y="0" width="0.100" height="4" fill="#c2565c" />)}
        <rect x="0" y="8" width="8" height="3" fill="#d08468" />
      </g>
    ))}
    <rect x="0" y="17" width="65" height="1" fill="#7d6bd0" />
    <rect x="0" y="18" width="65" height="1" fill="#5590b8" />
    <rect x="16" y="19" width="48" height="1" fill="#5b9cc8" />
    <rect x="8" y="21" width="8" height="2" fill="#6fb0dd" />
    <rect x="24" y="21" width="32" height="2" fill="#6fb0dd" />
    <rect x="0" y="22" width="64" height="2" fill="#74b4e2" />
    <rect x="0" y="26" width="65" height="1" fill="#4f93c4" />
    {GROUPS[5].tracks[0].clips!.map((c) => <rect key={c.at} x={c.at} y="31" width={c.len} height="2" fill="#5fa58b" />)}
    {GROUPS[5].tracks[1].clips!.map((c) => <rect key={c.at} x={c.at} y="33" width={c.len} height="1" fill="#6fb79a" />)}
  </svg>
);

/* ---------- page ---------- */

export default function App() {
  const marks = Array.from({ length: 33 }, (_, i) => i * 2 + 1);
  return (
    <Shell>
      <Global />
      <Grip><i /><i /><i /><i /><i /></Grip>

      <Picker>
        <PickerTools>
          <ToolButton $on aria-label="Patterns"><PianoIcon /></ToolButton>
          <ToolButton aria-label="Audio clips"><WaveIcon /></ToolButton>
          <ToolButton aria-label="Automation clips"><AutoIcon /></ToolButton>
        </PickerTools>
        <PickerBox>
          <PickerList>
            {PICKER.map(([name, tint]) => {
              const t = TINTS[tint];
              return (
                <li key={name}>
                  <PickerItem $t={t}>
                    <PickerFrame>
                      <ClipHead $t={t} $h={27}><KeysIcon /><ClipName>{name}</ClipName></ClipHead>
                      <Notes name={name} color={t.note} />
                    </PickerFrame>
                    {name === "Vox" && (
                      <Marker width="15" height="22" viewBox="0 0 15 22" aria-hidden>
                        <path d="M1 1H4L13 11L4 21H1Z" fill="#e8405c" stroke="#16202a" strokeWidth="2" />
                      </Marker>
                    )}
                  </PickerItem>
                </li>
              );
            })}
          </PickerList>
          <PickerScroll><Thumb $h={28} aria-label="Scroll patterns" /></PickerScroll>
        </PickerBox>
        <AddButton aria-label="Add pattern">
          <svg width="16" height="16" viewBox="0 0 16 16" fill="#c6ccd2" aria-hidden><path d="M6 0H10V6H16V10H10V16H6V10H0V6H6Z" /></svg>
        </AddButton>
      </Picker>

      <Playlist>
        <TopRow>
          <Corner>
            <CornerTools>
              <ToolButton $ink="#747c80" aria-label="Show audio"><WaveIcon /></ToolButton>
              <ToolButton $ink="#e4e8eb" aria-label="Show automation"><AutoIcon /></ToolButton>
              <ToolButton $ink="#747c80" aria-label="Show patterns"><PianoIcon /></ToolButton>
            </CornerTools>
            <CornerSwitches>
              <Switch>STEP<input type="checkbox" /></Switch>
              <Switch>SLIDE<input type="checkbox" /></Switch>
            </CornerSwitches>
          </Corner>
          <TimeCol>
            <OverviewRow>
              <SquareButton aria-label="Scroll left"><Chevron turn={0} /></SquareButton>
              <Overview><OverviewThumb><OverviewDrawing /></OverviewThumb></Overview>
              <SquareButton aria-label="Scroll right"><Chevron turn={180} /></SquareButton>
            </OverviewRow>
            <RulerWrap>
              <Ruler>
                {marks.map((m) => (
                  <Mark key={m} $span={m === 65 ? 1 : 2} $major={m % 4 === 1}>{m}</Mark>
                ))}
                <PlayHead width="18" height="20" viewBox="0 0 18 20" aria-hidden>
                  <path d="M0 1H16V6L5 18L0 19Z" fill="#c3ee6a" stroke="#1f2a12" strokeWidth="2" />
                  <path d="M0 4H13" stroke="#efffae" strokeWidth="2" />
                </PlayHead>
              </Ruler>
            </RulerWrap>
          </TimeCol>
          <TopRight>
            <SquareButton aria-label="Detail view"><i /></SquareButton>
            <SquareButton aria-label="Scroll up"><Chevron turn={90} /></SquareButton>
          </TopRight>
        </TopRow>

        <Body>
          <HeaderCol>
            {GROUPS.map((g, i) => (
              <GroupBox key={i}>
                <GroupBody $g={g}>
                  {g.tracks.map((t, k) => <TrackHeader key={k} track={t} lead={k === 0} bg={g.color} />)}
                </GroupBody>
              </GroupBox>
            ))}
          </HeaderCol>
          <Gutter>
            {GROUPS.flatMap((g) => g.tracks).map((t, i) => <GutterCell key={i} $h={HEIGHTS[t.size]} />)}
          </Gutter>
          <Lanes>
            {GROUPS.flatMap((g) => g.tracks).map((t, i) => <LaneView key={i} track={t} />)}
          </Lanes>
          <VScroll>
            <Thumb $h={66} aria-label="Scroll tracks" />
            <SquareButton aria-label="Scroll down"><Chevron turn={270} /></SquareButton>
          </VScroll>
        </Body>
      </Playlist>
    </Shell>
  );
}
